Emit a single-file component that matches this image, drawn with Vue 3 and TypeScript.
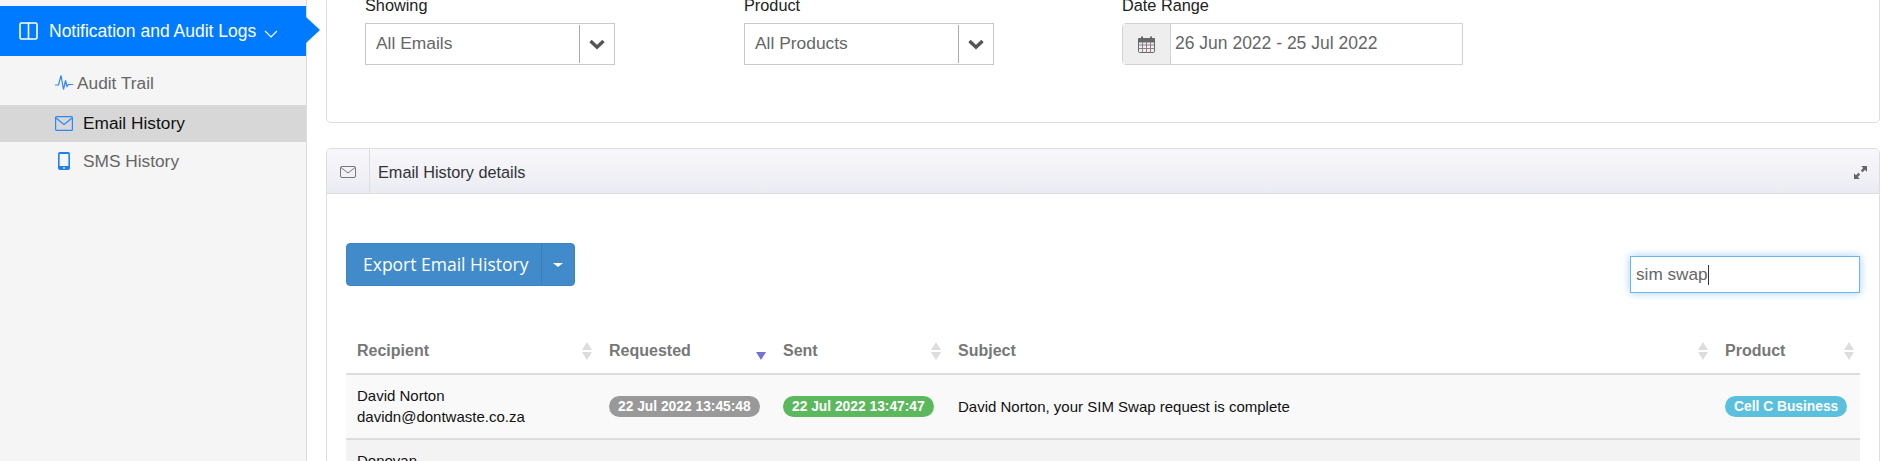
<script setup lang="ts">
type Nav = { label: string; icon: string; active?: boolean }
type Filter = { label: string; value: string }
type Row = {
  name: string
  email?: string
  requested?: string
  sent?: string
  subject?: string
  product?: string
}

const navItems: Nav[] = [
  { label: 'Audit Trail', icon: 'pulse' },
  { label: 'Email History', icon: 'mail', active: true },
  { label: 'SMS History', icon: 'phone' }
]

const filters: Filter[] = [
  { label: 'Showing', value: 'All Emails' },
  { label: 'Product', value: 'All Products' }
]

const columns = ['Recipient', 'Requested', 'Sent', 'Subject', 'Product']

const rows: Row[] = [
  {
    name: 'David Norton',
    email: 'davidn@dontwaste.co.za',
    requested: '22 Jul 2022 13:45:48',
    sent: '22 Jul 2022 13:47:47',
    subject: 'David Norton, your SIM Swap request is complete',
    product: 'Cell C Business'
  },
  { name: 'Donovan' }
]
</script>

<template>
  <div class="page">
    <aside class="sidebar">
      <div class="menu-head">
        <svg class="head-icon" viewBox="0 0 19 18" fill="none" stroke="#fff" stroke-width="1.6">
          <rect x="1" y="1" width="17" height="16" rx="1.5" />
          <path d="M9.5 1v16" />
        </svg>
        <span class="head-label">Notification and Audit Logs</span>
        <svg class="head-chevron" viewBox="0 0 14 8" fill="none" stroke="#fff" stroke-width="1.2">
          <path d="M1 1l6 6 6-6" />
        </svg>
      </div>
      <ul class="menu">
        <li v-for="item in navItems" :key="item.label" :class="['menu-item', item.icon, { active: item.active }]">
          <span class="menu-icon">
            <svg v-if="item.icon === 'pulse'" width="18" height="16" viewBox="0 0 18 16" fill="none" stroke="#2f86f6" stroke-width="1.2">
              <path d="M0 10h3.5L6 0.5l2.5 14 2-9 1.5 6 1.5-2H18" />
            </svg>
            <svg v-else-if="item.icon === 'mail'" width="18" height="15" viewBox="0 0 18 15" fill="none" stroke="#2f86f6" stroke-width="1.2">
              <rect x=".6" y=".6" width="16.8" height="13.8" rx="1" />
              <path d="M1 2l8 6.5L17 2" />
            </svg>
            <svg v-else width="12" height="18" viewBox="0 0 12 18">
              <rect width="12" height="18" rx="2" fill="#1f7ff5" />
              <rect x="1.6" y="2" width="8.8" height="12" fill="#f5f5f5" />
              <circle cx="6" cy="16" r=".9" fill="#f5f5f5" />
            </svg>
          </span>
          <span>{{ item.label }}</span>
        </li>
      </ul>
    </aside>

    <main class="content">
      <section class="panel filters">
        <div v-for="filter in filters" :key="filter.label" class="filter">
          <label>{{ filter.label }}</label>
          <div class="select">
            <span class="select-value">{{ filter.value }}</span>
            <span class="select-arrow">
              <svg width="16" height="11" viewBox="0 0 16 11" fill="none" stroke="#555" stroke-width="3.4">
                <path d="M1.5 2l6.5 6.2L14.500 2" />
              </svg>
            </span>
          </div>
        </div>
        <div class="filter date">
          <label>Date Range</label>
          <div class="date-input">
            <span class="date-addon">
              <svg width="17" height="17" viewBox="0 0 17 17" fill="none" stroke="#666" stroke-width="1">
                <rect x=".5" y="2.5" width="16" height="14" rx="1" />
                <path d="M.5 2.500h16v3.500H.5z" fill="#666" />
                <path d="M.5 9h16M.5 12.500h16M4.500 6v10.500M8.500 6v10.500M12.500 6v10.500" stroke="#8a7f86" />
                <path d="M4 .5v3.500M13 .5v3.500" stroke-width="2" />
              </svg>
            </span>
            <span class="date-value">26 Jun 2022 - 25 Jul 2022</span>
          </div>
        </div>
      </section>

      <section class="panel details">
        <header class="details-head">
          <span class="details-icon">
            <svg width="16" height="12" viewBox="0 0 16 12" fill="none" stroke="#777" stroke-width="1">
              <rect x=".5" y=".5" width="15" height="11" rx="1.5" />
              <path d="M1 1.500l7 5.500 7-5.500" />
            </svg>
          </span>
          <span class="details-title">Email History details</span>
          <svg class="expand" width="13" height="13" viewBox="0 0 13 13" fill="#666">
            <path d="M7.200 0H13v5.800l-2-2-2.400 2.400-1.800-1.800L9.200 2zM0 7.200l2 2 2.400-2.400 1.800 1.800L3.800 11l2 2H0z" />
          </svg>
        </header>

        <div class="toolbar">
          <div class="export">
            <span class="export-label">Export Email History</span>
            <span class="export-caret"></span>
          </div>
          <div class="search">sim swap<i class="caret"></i></div>
        </div>

        <table class="grid">
          <colgroup>
            <col style="width: 252px" />
            <col style="width: 174px" />
            <col style="width: 175px" />
            <col />
            <col style="width: 146px" />
          </colgroup>
          <thead>
            <tr>
              <th v-for="col in columns" :key="col">
                {{ col }}
                <span v-if="col === 'Requested'" class="sort-down"></span>
                <span v-else class="sort"></span>
              </th>
            </tr>
          </thead>
          <tbody>
            <tr v-for="(row, i) in rows" :key="row.name" :class="i % 2 ? 'even' : 'odd'">
              <td>
                <div>{{ row.name }}</div>
                <div v-if="row.email">{{ row.email }}</div>
              </td>
              <td><span v-if="row.requested" class="badge grey">{{ row.requested }}</span></td>
              <td><span v-if="row.sent" class="badge green">{{ row.sent }}</span></td>
              <td>{{ row.subject }}</td>
              <td><span v-if="row.product" class="badge blue">{{ row.product }}</span></td>
            </tr>
          </tbody>
        </table>
      </section>
    </main>
  </div>
</template>

<style>
html,
body {
  margin: 0;
  height: 100%;
  overflow: hidden;
  background: #fff;
}
</style>

<style scoped>
.page {
  display: flex;
  height: 461px;
  overflow: hidden;
  font-family: "Liberation Sans", Arial, sans-serif;
}

.sidebar {
  flex: 0 0 306px;
  padding-top: 6px;
  background: #f5f5f5;
  border-right: 1px solid #ddd;
}

.menu-head {
  position: relative;
  display: flex;
  align-items: center;
  height: 50px;
  padding-left: 19px;
  background: #007bff;
  color: #fff;
  font-size: 17.5px;
}

.menu-head::after {
  content: "";
  position: absolute;
  left: 100%;
  top: 11px;
  border-left: 14px solid #007bff;
  border-top: 13px solid transparent;
  border-bottom: 13px solid transparent;
}

.head-icon {
  width: 19px;
  height: 18px;
  margin-right: 11px;
}

.head-chevron {
  width: 14px;
  height: 8px;
  margin: 6px 0 0 8px;
}

.menu {
  margin: 0;
  padding: 10px 0 0;
  list-style: none;
}

.menu-item {
  display: flex;
  align-items: center;
  height: 38px;
  padding-left: 55px;
  color: #666;
  font-size: 17.3px;
}

.menu-item.pulse {
  height: 34px;
  margin-bottom: 5px;
}

.menu-item.active {
  height: 37px;
  background: #d7d7d7;
  color: #111;
}

.menu-icon {
  display: inline-flex;
  justify-content: center;
  width: 18px;
  margin-right: 10px;
}

.menu-item.pulse .menu-icon {
  margin-right: 4px;
}

.content {
  flex: 1;
  min-width: 0;
  margin-top: -40px;
  padding: 0 16px 0 19px;
}

.panel {
  background: #fff;
  border: 1px solid #ddd;
  border-radius: 5px;
}

.filters {
  display: flex;
  height: 163px;
  box-sizing: border-box;
  padding: 33px 0 0 38px;
}

.filter {
  width: 379px;
}

.filter + .filter {
  width: 378px;
}

.filter.date {
  width: 341px;
}

.filter label {
  display: block;
  height: 23px;
  margin-bottom: 6px;
  color: #222;
  font-size: 16.3px;
  line-height: 23px;
}

.select {
  display: flex;
  align-items: center;
  box-sizing: border-box;
  width: 250px;
  height: 42px;
  border: 1px solid #c8c8c8;
  background: #fff;
}

.select-value {
  flex: 1;
  padding: 0 0 2px 10px;
  color: #666;
  font-size: 17.4px;
}

.select-arrow {
  display: flex;
  align-items: center;
  justify-content: center;
  width: 34px;
  height: 38px;
  border-left: 1px solid #aaa;
}

.date-input {
  display: flex;
  box-sizing: border-box;
  height: 42px;
  border: 1px solid #d2d2d2;
  border-radius: 4px 0 0 4px;
}

.date-addon {
  display: flex;
  align-items: center;
  justify-content: center;
  width: 47px;
  background: #eee;
  border-right: 1px solid #d2d2d2;
}

.date-value {
  align-self: center;
  padding: 0 0 2px 4px;
  color: #666;
  font-size: 17.5px;
}

.details {
  margin-top: 25px;
  overflow: hidden;
}

.details-head {
  display: flex;
  align-items: center;
  height: 45px;
  box-sizing: border-box;
  background: linear-gradient(#f8f8fb, #ebebf3);
  border-bottom: 1px solid #ddd;
}

.details-icon {
  display: flex;
  align-items: center;
  justify-content: center;
  box-sizing: border-box;
  width: 43px;
  height: 100%;
  padding-top: 2px;
  border-right: 1px solid #ddd;
}

.details-title {
  flex: 1;
  padding: 3px 0 0 8px;
  color: #333;
  font-size: 16.3px;
}

.expand {
  margin: 2px 12px 0 0;
}

.toolbar {
  display: flex;
  align-items: flex-end;
  justify-content: space-between;
  padding: 49px 19px 0;
}

.export {
  display: flex;
  align-items: center;
  box-sizing: border-box;
  width: 229px;
  height: 43px;
  background: #428bca;
  border: 1px solid #3f84c0;
  border-radius: 4px;
  color: #fff;
  font-family: "Open Sans", sans-serif;
  font-size: 17.5px;
}

.export-label {
  flex: 1;
  padding-left: 16px;
  line-height: 41px;
  border-right: 1px solid #3a7cb5;
}

.export-caret {
  width: 0;
  margin: 0 11px;
  border-top: 4px solid #fff;
  border-left: 5px solid transparent;
  border-right: 5px solid transparent;
}

.search {
  display: flex;
  align-items: center;
  box-sizing: border-box;
  width: 230px;
  height: 37px;
  margin-bottom: -7px;
  padding-left: 5px;
  border: 1px solid #6cb6f0;
  box-shadow: 0 0 8px rgba(102, 175, 233, 0.6);
  color: #666;
  font-size: 17.2px;
}

.caret {
  width: 1px;
  height: 20px;
  background: #333;
}

.grid {
  width: 1514px;
  margin: 40px 0 0 19px;
  border-collapse: collapse;
  table-layout: fixed;
  color: #111;
  font-size: 15px;
}

.grid th {
  position: relative;
  height: 48px;
  box-sizing: border-box;
  padding: 2px 11px 0;
  border-bottom: 2px solid #ddd;
  color: #777;
  font-size: 16px;
  text-align: left;
}

.sort,
.sort-down {
  position: absolute;
  right: 6px;
}

.sort {
  top: 16px;
  width: 0;
  height: 0;
  border-left: 5px solid transparent;
  border-right: 5px solid transparent;
  border-bottom: 8px solid #ddd;
}

.sort::after {
  content: "";
  position: absolute;
  top: 10px;
  left: -5px;
  border-left: 5px solid transparent;
  border-right: 5px solid transparent;
  border-top: 8px solid #ddd;
}

.sort-down {
  top: 26px;
  border-left: 5px solid transparent;
  border-right: 5px solid transparent;
  border-top: 8px solid #7272d8;
}

.grid td {
  padding: 10px 11px 11px;
  border-bottom: 2px solid #ddd;
  line-height: 21px;
  vertical-align: middle;
}

.odd td {
  background: #f9f9f9;
}

.even td {
  background: #f3f3f3;
}

.badge {
  display: inline-block;
  padding: 0 9px;
  border-radius: 11px;
  color: #fff;
  font-size: 13.8px;
  font-weight: bold;
  line-height: 21px;
  white-space: nowrap;
}

.grey {
  background: #999;
}

.green {
  background: #5cb85c;
}

.blue {
  background: #5bc0de;
}
</style>
